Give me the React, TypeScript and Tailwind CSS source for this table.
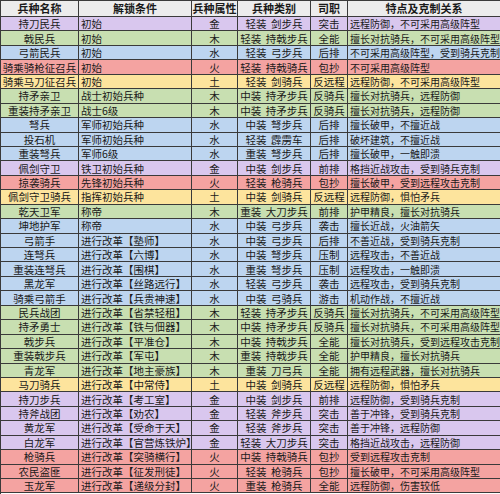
import React from "react";

type Row = [string, string, string, string, string, string, string];

const P = "bg-[#d9c7ee]";
const G = "bg-[#c8dfb1]";
const B = "bg-[#bdd5f0]";
const R = "bg-[#f4a3a1]";
const Y = "bg-[#fde49d]";

const rows: Row[] = [
  ["持刀民兵", "初始", "金", "轻装  剑步兵", "突击", "远程防御，不可采用高级阵型", P],
  ["戟民兵", "初始", "木", "轻装  持戟步兵", "全能", "擅长对抗骑兵，不可采用高级阵型", G],
  ["弓箭民兵", "初始", "水", "轻装  弓步兵", "后排", "不可采用高级阵型，受到骑兵克制", B],
  ["骑乘骑枪征召兵", "初始", "火", "轻装  持戟骑兵", "包抄", "不可采用高级阵型", R],
  ["骑乘马刀征召兵", "初始", "土", "轻装  剑骑兵", "反远程", "远程防御，不可采用高级阵型", Y],
  ["持矛亲卫", "战士初始兵种", "木", "中装  持矛步兵", "反骑兵", "擅长对抗骑兵，远程防御", G],
  ["重装持矛亲卫", "战士6级", "木", "中装  持矛步兵", "反骑兵", "擅长对抗骑兵，远程防御", G],
  ["弩兵", "军师初始兵种", "水", "中装  弩步兵", "后排", "擅长破甲，不擅近战", B],
  ["投石机", "军师初始兵种", "水", "轻装  霹雳车", "后排", "破坏建筑，不擅近战", B],
  ["重装弩兵", "军师6级", "水", "重装  弩步兵", "后排", "擅长破甲，一触即溃", B],
  ["佩剑守卫", "铁卫初始兵种", "金", "中装  剑步兵", "前排", "格挡近战攻击，受到骑兵克制", P],
  ["掠袭骑兵", "先锋初始兵种", "火", "轻装  枪骑兵", "包抄", "擅长破甲，受到远程攻击克制", R],
  ["佩剑守卫骑兵", "指挥初始兵种", "土", "中装  剑骑兵", "反远程", "远程防御，惧怕矛兵", Y],
  ["乾天卫军", "称帝", "木", "重装  大刀步兵", "前排", "护甲精良，擅长对抗骑兵", G],
  ["坤地护军", "称帝", "水", "中装  弓步兵", "袭击", "擅长近战，火油箭矢", B],
  ["弓箭手", "进行改革【塾师】", "水", "中装  弓步兵", "后排", "不善近战，受到骑兵克制", B],
  ["连弩兵", "进行改革【六博】", "水", "中装  弩步兵", "压制", "远程攻击，不善近战", B],
  ["重装连弩兵", "进行改革【围棋】", "水", "重装  弩步兵", "压制", "远程攻击，一触即溃", B],
  ["黑龙军", "进行改革【丝路远行】", "水", "轻装  弓步兵", "袭击", "远程攻击，受到骑兵克制", B],
  ["骑乘弓箭手", "进行改革【兵贵神速】", "水", "中装  弓骑兵", "游击", "机动作战，不擅近战", B],
  ["民兵战团", "进行改革【省禁轻租】", "木", "轻装  持矛步兵", "反骑兵", "擅长对抗骑兵，不可采用高级阵型", G],
  ["持矛勇士", "进行改革【铁与佃器】", "木", "中装  持矛步兵", "反骑兵", "擅长对抗骑兵，不可采用高级阵型", G],
  ["戟步兵", "进行改革【平准仓】", "木", "中装  持戟步兵", "全能", "擅长对抗骑兵，受到远程攻击克制", G],
  ["重装戟步兵", "进行改革【军屯】", "木", "重装  持戟步兵", "全能", "护甲精良，擅长对抗骑兵", G],
  ["青龙军", "进行改革【地主豪族】", "木", "重装  刀弓兵", "全能", "拥有远程武器，擅长对抗骑兵", G],
  ["马刀骑兵", "进行改革【中常侍】", "土", "中装  剑骑兵", "反远程", "远程防御，惧怕矛兵", Y],
  ["持刀步兵", "进行改革【考工室】", "金", "中装  剑步兵", "前排", "远程防御，受到骑兵克制", P],
  ["持斧战团", "进行改革【劝农】", "金", "轻装  斧步兵", "突击", "善于冲锋，受到骑兵克制", P],
  ["黄龙军", "进行改革【受命于天】", "金", "轻装  斧步兵", "突击", "善于冲锋，远程防御", P],
  ["白龙军", "进行改革【官营炼铁炉】", "金", "轻装  大刀步兵", "突击", "格挡近战攻击，远程防御", P],
  ["枪骑兵", "进行改革【突骑横行】", "火", "中装  持戟骑兵", "包抄", "受到远程攻击克制", R],
  ["农民盗匪", "进行改革【征发刑徒】", "火", "轻装  枪骑兵", "包抄", "擅长破甲，不可采用高级阵型", R],
  ["玉龙军", "进行改革【递级分封】", "火", "重装  枪骑兵", "全能", "远程防御，伤害较低", R],
];

const cols = "grid grid-cols-[78px_113px_46px_73px_37px_153px]";
const cell = "flex items-center border-r border-[#3a3a3a] whitespace-pre leading-[13px]";

export default function App() {
  return (
    <div
      className="w-[500px] h-[494px] bg-white text-[#1a1a1a] border-l border-t border-[#3a3a3a] overflow-hidden"
      style={{ fontFamily: '"Noto Sans CJK SC", "Noto Sans", sans-serif' }}
    >
      <div className={`${cols} h-[16px] bg-[#ececec] border-b border-[#3a3a3a] text-[11px] font-bold`}>
        <div className={`${cell} justify-center`}>兵种名称</div>
        <div className={`${cell} justify-center`}>解锁条件</div>
        <div className={`${cell} justify-center`}>兵种属性</div>
        <div className={`${cell} justify-center`}>兵种类别</div>
        <div className={`${cell} justify-center`}>司职</div>
        <div className={`${cell} justify-center`}>特点及克制关系</div>
      </div>
      {rows.map((r, i) => (
        <div key={i} className={`${cols} h-[14.45px] border-b border-[#3a3a3a] text-[10.5px] ${r[6]}`}>
          <div className={`${cell} justify-center`}>{r[0]}</div>
          <div className={`${cell} justify-start pl-[2px]`}>{r[1]}</div>
          <div className={`${cell} justify-center`}>{r[2]}</div>
          <div className={`${cell} justify-center`}>{r[3]}</div>
          <div className={`${cell} justify-center`}>{r[4]}</div>
          <div className={`${cell} justify-start pl-[2px] text-[10px]`}>{r[5]}</div>
        </div>
      ))}
    </div>
  );
}
